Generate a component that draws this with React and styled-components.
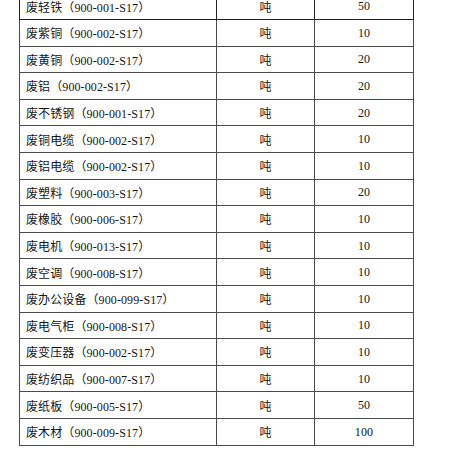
import React from "react";
import styled, { createGlobalStyle } from "styled-components";

const rows = [
  ["废轻铁（900-001-S17）", "50"],
  ["废紫铜（900-002-S17）", "10"],
  ["废黄铜（900-002-S17）", "20"],
  ["废铝（900-002-S17）", "20"],
  ["废不锈钢（900-001-S17）", "20"],
  ["废铜电缆（900-002-S17）", "10"],
  ["废铝电缆（900-002-S17）", "10"],
  ["废塑料（900-003-S17）", "20"],
  ["废橡胶（900-006-S17）", "10"],
  ["废电机（900-013-S17）", "10"],
  ["废空调（900-008-S17）", "10"],
  ["废办公设备（900-099-S17）", "10"],
  ["废电气柜（900-008-S17）", "10"],
  ["废变压器（900-002-S17）", "10"],
  ["废纺织品（900-007-S17）", "10"],
  ["废纸板（900-005-S17）", "50"],
  ["废木材（900-009-S17）", "100"],
];

const GlobalStyle = createGlobalStyle`
  body {
    margin: 0;
    background: #ffffff;
    overflow: hidden;
    font-family: "Liberation Serif", "Noto Sans CJK SC", serif;
  }
`;

const Page = styled.div`
  width: 450px;
  height: 450px;
  overflow: hidden;
  padding-left: 19px;
  box-sizing: border-box;
`;

const Table = styled.table`
  margin-top: -7.6px;
  width: 395px;
  border-collapse: collapse;
  table-layout: fixed;
  color: #151515;
  font-size: 12px;
`;

const Row = styled.tr`
  height: 26.6px;
`;

const Cell = styled.td`
  border: 1px solid ${(p) => (p.$dark ? "#222" : "#4a4a4a")};
  padding: 1px 0 0 ${(p) => (p.$left ? "6px" : "0")};
  text-align: ${(p) => (p.$left ? "left" : "center")};
  vertical-align: middle;
  white-space: nowrap;
  letter-spacing: 0.1px;
`;

const Note = styled.div`
  padding: 2px 0 0 6px;
  font-size: 12px;
  color: #151515;
  white-space: nowrap;
`;

const App = () => {
  return (
    <Page>
      <GlobalStyle />
      <Table>
        <colgroup>
          <col style={{ width: "197px" }} />
          <col style={{ width: "98px" }} />
          <col style={{ width: "99px" }} />
        </colgroup>
        <tbody>
          {rows.map(([name, qty], i) => (
            <Row key={i}>
              <Cell $left $dark={i === 0}>{name}</Cell>
              <Cell $dark={i === 0}>吨</Cell>
              <Cell $dark={i === 0}>{qty}</Cell>
            </Row>
          ))}
        </tbody>
      </Table>
      <Note>
        注：一本表中的数量仅为预估量，结算量以实际数量为准，最终以实际数量与预估的数量
      </Note>
    </Page>
  );
};

export default App;
